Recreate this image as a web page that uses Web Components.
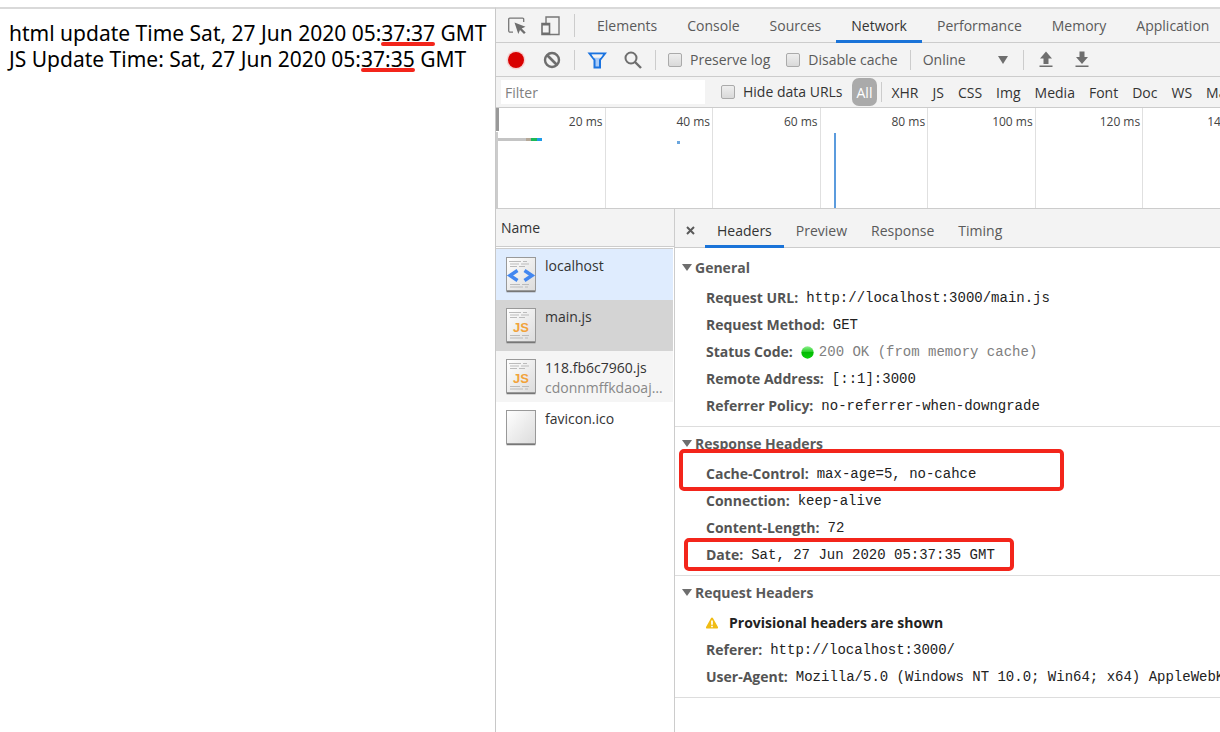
<!DOCTYPE html>
<html lang="en">
<head>
<meta charset="utf-8">
<title>localhost:3000</title>
<style>
    html, body {
        height: 100%;
        margin: 0;
    }
    body {
        background: #fff;
        overflow: hidden;
    }
</style>
</head>
<body>
<browser-window></browser-window>

<script>
const UI_FONT = '"Open Sans", "Noto Sans", sans-serif';
const MONO_FONT = '"Liberation Mono", monospace';

class BrowserWindow extends HTMLElement {
    constructor() {
        super();
        this.attachShadow({ mode: 'open' });
        this.shadowRoot.innerHTML = `
            <style>
                :host {
                    display: grid;
                    grid-template-columns: minmax(0, 495fr) minmax(0, 725fr);
                    box-sizing: border-box;
                    height: 100%;
                    padding-top: 7px;
                }
                page-view, dev-tools {
                    border-top: 2px solid #d9d9d9;
                }
            </style>
            <page-view></page-view>
            <dev-tools></dev-tools>
        `;
    }
}

class PageView extends HTMLElement {
    constructor() {
        super();
        this.attachShadow({ mode: 'open' });
        this.shadowRoot.innerHTML = `
            <style>
                :host {
                    display: block;
                    padding: 11px 9px;
                    font: 21px/26px "Noto Sans", "Open Sans", sans-serif;
                    color: #000;
                    white-space: nowrap;
                }
            </style>
            <div>html update Time Sat, 27 Jun 2020 05:<pen-line>37:37</pen-line> GMT</div>
            <div>JS Update Time: Sat, 27 Jun 2020 05:<pen-line>37:35</pen-line> GMT</div>
        `;
    }
}

// red stroke under a piece of text
class PenLine extends HTMLElement {
    constructor() {
        super();
        this.attachShadow({ mode: 'open' });
        this.shadowRoot.innerHTML = `
            <style>
                :host {
                    display: inline-block;
                    position: relative;
                }
                :host::after {
                    content: "";
                    position: absolute;
                    left: 0;
                    right: 0;
                    bottom: 0;
                    height: 4px;
                    border-radius: 2px;
                    background: #f3251b;
                }
            </style>
            <slot></slot>
        `;
    }
}

const ICONS = {
    inspect: '<path d="M6 16.200H3.200a1.500 1.500 0 0 1-1.500-1.500V3.200a1 1 0 0 1 1-1h13a1 1 0 0 1 1 1V6" fill="none" stroke="#777" stroke-width="1.300"/><path d="M7.500 6.500l11 4.200-3.800 1.700 4 4-1.700 1.700-4-4-1.700 3.900z" fill="#6e6e6e"/>',
    device: '<path d="M5 7V1h13v17.500H9" fill="none" stroke="#777" stroke-width="1.400"/><path d="M1 7.500h7.500v11H1z" fill="none" stroke="#6e6e6e" stroke-width="1.600"/><path d="M1 7.500h7.500v2H1zM1 16.500h7.500v2H1z" fill="#6e6e6e"/>',
    record: '<circle cx="10" cy="10" r="9.500" fill="#f7bcbc" opacity=".6"/><circle cx="10" cy="10" r="8" fill="#d80000"/>',
    clear: '<circle cx="10" cy="10" r="7" fill="none" stroke="#6e6e6e" stroke-width="2.400"/><path d="M5 5l10 10" stroke="#6e6e6e" stroke-width="2.600"/>',
    filter: '<path d="M2.500 3.500h15.500l-5 6.500v7.500H7.500V10z" fill="#a9cbf7" stroke="#1a73e0" stroke-width="2"/><path d="M4.500 4.500h11.500l-2.300 3.300H6.800z" fill="#f3f3f3"/>',
    search: '<circle cx="8" cy="8" r="5.500" fill="none" stroke="#6e6e6e" stroke-width="2"/><path d="M12 12l6 6" stroke="#6e6e6e" stroke-width="2.400"/>',
    upload: '<path d="M10 1.500l6 7h-3.500V14h-5V8.500H4zM3.500 15.500h13v1.500h-13z" fill="#6e6e6e"/>',
    download: '<path d="M10 14l6-7h-3.500V1.500h-5V7H4zM3.500 15.500h13v1.500h-13z" fill="#6e6e6e"/>',
    warning: '<path d="M10 2a1.500 1.500 0 0 1 1.300.8l7.200 13c.5 1-.1 2.200-1.300 2.200H2.800c-1.200 0-1.800-1.200-1.300-2.200l7.200-13A1.500 1.500 0 0 1 10 2z" fill="#f0bc14"/><path d="M8.800 6.500h2.400v6H8.800zM8.800 13.800h2.400v2.300H8.800z" fill="#fff"/>',
    ball: '<defs><linearGradient id="g" x1="0" y1="0" x2="0" y2="1"><stop offset="0" stop-color="#8ff08f"/><stop offset=".45" stop-color="#25cf25"/><stop offset=".5" stop-color="#04ba04"/><stop offset="1" stop-color="#0bd00b"/></linearGradient></defs><circle cx="10" cy="10" r="9.500" fill="url(#g)"/>'
};

class ToolIcon extends HTMLElement {
    constructor() {
        super();
        this.attachShadow({ mode: 'open' });
    }

    connectedCallback() {
        this.shadowRoot.innerHTML = `
            <style>
                :host {
                    display: inline-block;
                    flex: none;
                    width: var(--icon-size, 20px);
                    height: var(--icon-size, 20px);
                }
                svg {
                    display: block;
                    width: 100%;
                    height: 100%;
                }
            </style>
            <svg viewBox="0 0 20 20" aria-hidden="true">${ICONS[this.getAttribute('name')]}</svg>
        `;
    }
}

class CheckOption extends HTMLElement {
    constructor() {
        super();
        this.attachShadow({ mode: 'open' });
        this.shadowRoot.innerHTML = `
            <style>
                :host {
                    display: block;
                    flex: none;
                }
                label {
                    display: flex;
                    align-items: center;
                    gap: 8px;
                }
                input {
                    appearance: none;
                    width: 14px;
                    height: 14px;
                    margin: 0;
                    border: 1px solid #aaa;
                    border-radius: 2px;
                    background: linear-gradient(#eee, #d9d9d9);
                }
                input:checked {
                    background: #1a73e8;
                }
            </style>
            <label><input type="checkbox"><slot></slot></label>
        `;
    }
}

class DevTools extends HTMLElement {
    constructor() {
        super();
        this.attachShadow({ mode: 'open' });
        this.shadowRoot.innerHTML = `
            <style>
                :host {
                    display: flex;
                    flex-direction: column;
                    min-height: 0;
                    border-left: 1px solid #c8c8c8;
                    font: 14px/20px ${UI_FONT};
                    color: #5a5a5a;
                    white-space: nowrap;
                    overflow: hidden;
                }
                main {
                    display: grid;
                    grid-template-columns: 179px minmax(0, 1fr);
                    flex: 1;
                    min-height: 0;
                }
            </style>
            <main-tabs></main-tabs>
            <network-toolbar></network-toolbar>
            <filter-bar></filter-bar>
            <time-line></time-line>
            <main>
                <request-list></request-list>
                <request-details></request-details>
            </main>
        `;
    }
}

class MainTabs extends HTMLElement {
    constructor() {
        super();
        this.attachShadow({ mode: 'open' });
        this.shadowRoot.innerHTML = `
            <style>
                :host {
                    display: flex;
                    height: 33px;
                    background: #f3f3f3;
                    border-bottom: 1px solid #ccc;
                }
                .tools {
                    display: flex;
                    align-items: center;
                    gap: 14px;
                    margin: 5px 7px 5px 0;
                    padding: 0 13px 0 11px;
                    border-right: 1px solid #ccc;
                }
                button {
                    border: 0;
                    padding: 0;
                    background: none;
                    font: inherit;
                    color: inherit;
                }
                .icon {
                    display: flex;
                }
                .tab {
                    flex: none;
                    height: 34px;
                    padding: 3px 15px 0;
                    border-bottom: 3px solid transparent;
                }
                .tab.active {
                    color: #333;
                    border-bottom-color: #1a73d8;
                }
            </style>
            <div class="tools">
                <button class="icon" aria-label="Inspect"><tool-icon name="inspect"></tool-icon></button>
                <button class="icon" aria-label="Device"><tool-icon name="device"></tool-icon></button>
            </div>
            <button class="tab">Elements</button>
            <button class="tab">Console</button>
            <button class="tab">Sources</button>
            <button class="tab active">Network</button>
            <button class="tab">Performance</button>
            <button class="tab">Memory</button>
            <button class="tab">Application</button>
        `;
    }
}

class NetworkToolbar extends HTMLElement {
    constructor() {
        super();
        this.attachShadow({ mode: 'open' });
        this.shadowRoot.innerHTML = `
            <style>
                :host {
                    display: flex;
                    align-items: center;
                    height: 33px;
                    padding-left: 10px;
                    background: #f3f3f3;
                    border-bottom: 1px solid #ccc;
                }
                button {
                    display: flex;
                    border: 0;
                    padding: 0;
                    background: none;
                }
                .group {
                    display: flex;
                    align-items: center;
                    gap: 16px;
                }
                .line {
                    flex: none;
                    width: 1px;
                    height: 20px;
                    margin: 0 12px;
                    background: #ccc;
                }
                .throttle {
                    display: grid;
                    align-items: center;
                    width: 85px;
                    padding-right: 3px;
                }
                .throttle > * {
                    grid-area: 1 / 1;
                }
                select {
                    appearance: none;
                    border: 0;
                    padding: 0;
                    background: none;
                    font: inherit;
                    color: inherit;
                }
                .arrow {
                    justify-self: end;
                    border: 5px solid transparent;
                    border-top: 8px solid #6e6e6e;
                    border-bottom: 0;
                    pointer-events: none;
                }
            </style>
            <div class="group">
                <button aria-label="Record"><tool-icon name="record"></tool-icon></button>
                <button aria-label="Clear"><tool-icon name="clear"></tool-icon></button>
            </div>
            <span class="line"></span>
            <div class="group">
                <button aria-label="Filter"><tool-icon name="filter"></tool-icon></button>
                <button aria-label="Search"><tool-icon name="search"></tool-icon></button>
            </div>
            <span class="line"></span>
            <div class="group">
                <check-option>Preserve log</check-option>
                <check-option>Disable cache</check-option>
            </div>
            <span class="line"></span>
            <div class="throttle">
                <select aria-label="Throttling"><option>Online</option></select>
                <span class="arrow"></span>
            </div>
            <span class="line"></span>
            <div class="group">
                <button aria-label="Import"><tool-icon name="upload"></tool-icon></button>
                <button aria-label="Export"><tool-icon name="download"></tool-icon></button>
            </div>
        `;
    }
}

class FilterBar extends HTMLElement {
    constructor() {
        super();
        this.attachShadow({ mode: 'open' });
        this.shadowRoot.innerHTML = `
            <style>
                :host {
                    display: flex;
                    align-items: center;
                    height: 30px;
                    padding-left: 5px;
                    background: #f3f3f3;
                    border-bottom: 1px solid #ccc;
                    color: #333;
                }
                input {
                    box-sizing: border-box;
                    flex: none;
                    width: 204px;
                    height: 24px;
                    margin-right: 16px;
                    padding: 0 4px;
                    border: 0;
                    background: #fff;
                    font: inherit;
                }
                input::placeholder {
                    color: #808080;
                }
                button {
                    flex: none;
                    border: 0;
                    padding: 2px 0 0;
                    background: none;
                    font: inherit;
                    color: inherit;
                }
                button + button {
                    margin-left: 14px;
                }
                .all {
                    height: 28px;
                    margin-left: 9px;
                    padding: 2px 5px 0;
                    border-radius: 7px;
                    background: #aaa;
                    color: #fff;
                }
                .line {
                    flex: none;
                    width: 1px;
                    height: 20px;
                    margin: 0 9px 0 4px;
                    background: #ccc;
                }
            </style>
            <input type="text" placeholder="Filter" aria-label="Filter">
            <check-option>Hide data URLs</check-option>
            <button class="all">All</button>
            <span class="line"></span>
            <button>XHR</button>
            <button>JS</button>
            <button>CSS</button>
            <button>Img</button>
            <button>Media</button>
            <button>Font</button>
            <button>Doc</button>
            <button>WS</button>
            <button>Manifest</button>
        `;
    }
}

class TimeLine extends HTMLElement {
    constructor() {
        super();
        this.attachShadow({ mode: 'open' });
        this.shadowRoot.innerHTML = `
            <style>
                :host {
                    display: grid;
                    grid-template-columns: repeat(7, calc(100% * 7 / 47));
                    position: relative;
                    height: 100px;
                    padding-left: 2px;
                    border-bottom: 1px solid #ccc;
                    background: #fff;
                    overflow: hidden;
                }
                .tick {
                    padding: 4px 2px 0 0;
                    border-right: 1px solid #e0e0e0;
                    font-size: 12px;
                    color: #444;
                    text-align: right;
                }
                .mark {
                    position: absolute;
                }
                .handle {
                    left: 0;
                    top: 0;
                    width: 3px;
                    height: 23px;
                    background: #999;
                }
                .edge {
                    left: 0;
                    top: 24px;
                    bottom: 0;
                    width: 2px;
                    background: #ccc;
                }
                .page {
                    left: 2px;
                    top: 30px;
                    width: 44px;
                    height: 3px;
                    background: linear-gradient(90deg, #c4c4c4 64%, #b5a898 64% 75%, #1cb955 75% 88%, #1e9be8 88%);
                }
                .script {
                    left: 25%;
                    top: 33px;
                    width: 3px;
                    height: 3px;
                    background: #6ba6de;
                }
                .loaded {
                    left: 46.7%;
                    top: 25px;
                    bottom: 0;
                    width: 2px;
                    background: #5b9bdd;
                }
            </style>
            ${[20, 40, 60, 80, 100, 120, 140].map(ms => `<div class="tick">${ms} ms</div>`).join('')}
            <span class="mark handle"></span>
            <span class="mark edge"></span>
            <span class="mark page"></span>
            <span class="mark script"></span>
            <span class="mark loaded"></span>
        `;
    }
}

class RequestList extends HTMLElement {
    constructor() {
        super();
        this.attachShadow({ mode: 'open' });
        this.shadowRoot.innerHTML = `
            <style>
                :host {
                    display: block;
                    border-right: 1px solid #ccc;
                    color: #333;
                }
                header {
                    height: 37px;
                    padding-left: 5px;
                    border-bottom: 1px solid #ccc;
                    background: #f3f3f3;
                    line-height: 37px;
                }
                .rows {
                    margin-right: 1px;
                    border-top: 1px solid #ccc;
                    margin-top: 1px;
                }
            </style>
            <header>Name</header>
            <div class="rows">
                <request-row kind="html" style="--row-color: #dfecfe">localhost</request-row>
                <request-row kind="js" style="--row-color: #d4d4d4">main.js</request-row>
                <request-row kind="js" style="--row-color: #f5f5f5">118.fb6c7960.js<span slot="path">cdonnmffkdaoajfkn</span></request-row>
                <request-row>favicon.ico</request-row>
            </div>
        `;
    }
}

const FILE_LINES = '<path d="M4 5.500h12M18 5.500h4M5 8h9M16 8h8M5 10.500h7M14 10.500h6" stroke="#bbb"/><path d="M5 28.500h10M17 28.500h7M5 31h13M20 31h3" stroke="#bbb"/>';
const FILE_ART = {
    html: FILE_LINES + '<path d="M12.500 14.500l-7.500 5 7.500 5M19.500 14.500l7.500 5-7.500 5" fill="none" stroke="#4387f0" stroke-width="3.500"/>',
    js: FILE_LINES + '<text x="8" y="25" font-family="Liberation Sans, sans-serif" font-weight="700" font-size="13" fill="#f2a33a">JS</text>'
};

class RequestRow extends HTMLElement {
    constructor() {
        super();
        this.attachShadow({ mode: 'open' });
    }

    connectedCallback() {
        this.shadowRoot.innerHTML = `
            <style>
                :host {
                    display: flex;
                    align-items: flex-start;
                    gap: 8px;
                    box-sizing: border-box;
                    height: 51px;
                    padding: 7px 9px;
                    background: var(--row-color, #fff);
                }
                svg {
                    flex: none;
                }
                .text {
                    min-width: 0;
                }
                .name, .path {
                    overflow: hidden;
                    text-overflow: ellipsis;
                }
                .path {
                    color: #888;
                }
            </style>
            <svg width="32" height="37" viewBox="0 0 32 37" aria-hidden="true">
                <defs><linearGradient id="p" x1="0" y1="0" x2="1" y2="1"><stop offset="0" stop-color="#fff"/><stop offset="1" stop-color="#dcdcdc"/></linearGradient></defs>
                <path d="M1.500 35.500h29" stroke="#777" stroke-width="1.500"/>
                <rect x="1.500" y="1.500" width="29" height="33" fill="url(#p)" stroke="#999"/>
                ${FILE_ART[this.getAttribute('kind')] || ''}
            </svg>
            <div class="text">
                <div class="name"><slot></slot></div>
                <div class="path"><slot name="path"></slot></div>
            </div>
        `;
    }
}

class RequestDetails extends HTMLElement {
    constructor() {
        super();
        this.attachShadow({ mode: 'open' });
        this.shadowRoot.innerHTML = `
            <style>
                :host {
                    display: block;
                    min-width: 0;
                    background: #fff;
                }
                nav {
                    display: flex;
                    height: 38px;
                    padding-left: 10px;
                    border-bottom: 1px solid #ccc;
                    background: #f3f3f3;
                }
                button {
                    border: 0;
                    border-bottom: 3px solid transparent;
                    height: 39px;
                    padding: 8px 12px 0;
                    background: none;
                    font: inherit;
                    color: inherit;
                }
                .close {
                    display: flex;
                    align-items: center;
                    padding: 6px 9px 0 0;
                }
                .active {
                    color: #333;
                    border-bottom-color: #1a73d8;
                }
                .content {
                    padding-top: 3px;
                }
            </style>
            <nav>
                <button class="close" aria-label="Close"><svg width="11" height="11" viewBox="0 0 11 11"><path d="M2 2l7 7M9 2l-7 7" stroke="#5a5a5a" stroke-width="2"/></svg></button>
                <button class="active">Headers</button>
                <button>Preview</button>
                <button>Response</button>
                <button>Timing</button>
            </nav>
            <div class="content">
                <header-section title="General">
                    <header-row name="Request URL">http://localhost:3000/main.js</header-row>
                    <header-row name="Request Method">GET</header-row>
                    <header-row name="Status Code" icon="ball" style="--value-color: #808080">200 OK (from memory cache)</header-row>
                    <header-row name="Remote Address">[::1]:3000</header-row>
                    <header-row name="Referrer Policy">no-referrer-when-downgrade</header-row>
                </header-section>
                <header-section title="Response Headers">
                    <header-row name="Cache-Control" boxed style="--box-top: -11px; --box-left: 4px; --box-width: 385px; --box-height: 42px">max-age=5, no-cahce</header-row>
                    <header-row name="Connection">keep-alive</header-row>
                    <header-row name="Content-Length">72</header-row>
                    <header-row name="Date" boxed style="--box-top: -3px; --box-left: 9px; --box-width: 330px; --box-height: 33px">Sat, 27 Jun 2020 05:37:35 GMT</header-row>
                </header-section>
                <header-section title="Request Headers">
                    <header-warning>Provisional headers are shown</header-warning>
                    <header-row name="Referer">http://localhost:3000/</header-row>
                    <header-row name="User-Agent">Mozilla/5.0 (Windows NT 10.0; Win64; x64) AppleWebKit/537.36</header-row>
                </header-section>
            </div>
        `;
    }
}

class HeaderSection extends HTMLElement {
    constructor() {
        super();
        this.attachShadow({ mode: 'open' });
    }

    connectedCallback() {
        this.shadowRoot.innerHTML = `
            <style>
                :host {
                    display: block;
                    padding-bottom: 7px;
                    border-bottom: 1px solid #ddd;
                }
                summary {
                    display: flex;
                    align-items: center;
                    gap: 3px;
                    height: 33px;
                    padding-left: 7px;
                    font-weight: 700;
                    list-style: none;
                }
                .arrow {
                    border: 5px solid transparent;
                    border-top: 7px solid #6e6e6e;
                    border-bottom: 0;
                }
            </style>
            <details open>
                <summary><span class="arrow"></span>${this.getAttribute('title')}</summary>
                <slot></slot>
            </details>
        `;
    }
}

class HeaderRow extends HTMLElement {
    constructor() {
        super();
        this.attachShadow({ mode: 'open' });
    }

    connectedCallback() {
        const icon = this.getAttribute('icon');
        this.shadowRoot.innerHTML = `
            <style>
                :host {
                    display: flex;
                    align-items: center;
                    gap: 8px;
                    position: relative;
                    height: 27px;
                    padding-left: 31px;
                }
                :host([boxed])::after {
                    content: "";
                    position: absolute;
                    box-sizing: border-box;
                    top: var(--box-top);
                    left: var(--box-left);
                    width: var(--box-width);
                    height: var(--box-height);
                    border: 4px solid #f3251b;
                    border-radius: 5px;
                }
                b {
                    color: #545454;
                }
                .value {
                    display: flex;
                    align-items: center;
                    gap: 5px;
                    padding-top: 1px;
                    font-family: ${MONO_FONT};
                    color: var(--value-color, #222);
                    --icon-size: 13px;
                }
            </style>
            <b>${this.getAttribute('name')}:</b>
            <span class="value">${icon ? `<tool-icon name="${icon}"></tool-icon>` : ''}<slot></slot></span>
        `;
    }
}

class HeaderWarning extends HTMLElement {
    constructor() {
        super();
        this.attachShadow({ mode: 'open' });
        this.shadowRoot.innerHTML = `
            <style>
                :host {
                    display: flex;
                    align-items: center;
                    gap: 10px;
                    height: 27px;
                    padding-left: 30px;
                    font-weight: 700;
                    color: #222;
                    --icon-size: 14px;
                }
            </style>
            <tool-icon name="warning"></tool-icon>
            <slot></slot>
        `;
    }
}

customElements.define('tool-icon', ToolIcon);
customElements.define('pen-line', PenLine);
customElements.define('check-option', CheckOption);
customElements.define('page-view', PageView);
customElements.define('main-tabs', MainTabs);
customElements.define('network-toolbar', NetworkToolbar);
customElements.define('filter-bar', FilterBar);
customElements.define('time-line', TimeLine);
customElements.define('request-row', RequestRow);
customElements.define('request-list', RequestList);
customElements.define('header-row', HeaderRow);
customElements.define('header-warning', HeaderWarning);
customElements.define('header-section', HeaderSection);
customElements.define('request-details', RequestDetails);
customElements.define('dev-tools', DevTools);
customElements.define('browser-window', BrowserWindow);
</script>
</body>
</html>
